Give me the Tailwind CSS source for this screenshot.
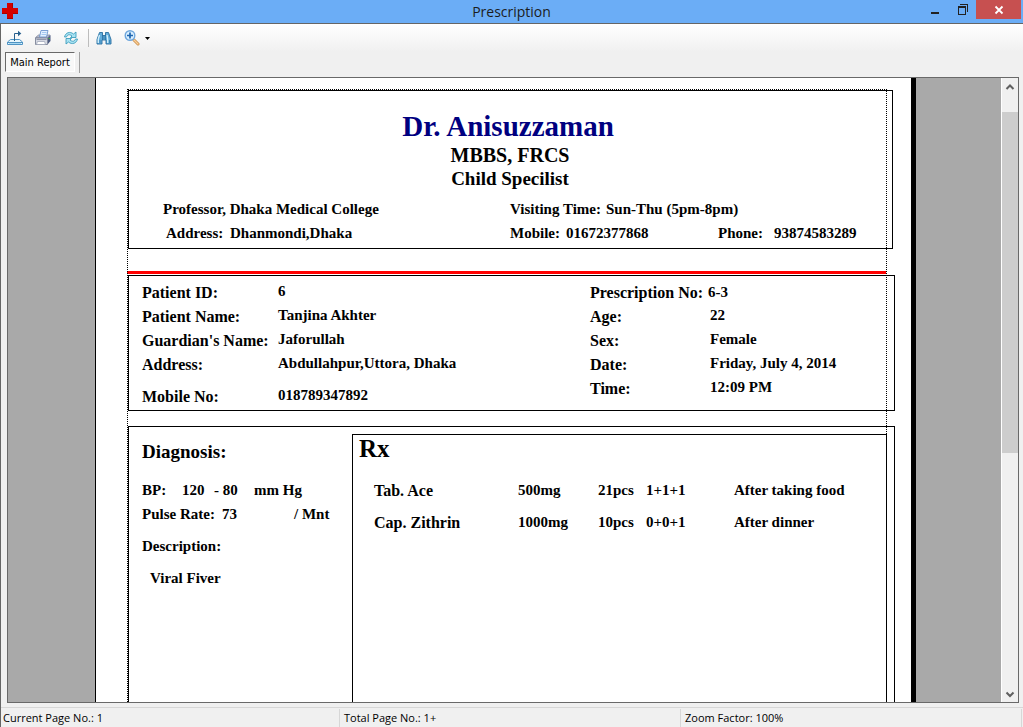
<!DOCTYPE html>
<html lang="en">
<head>
<meta charset="utf-8">
<meta name="viewport" content="width=device-width, initial-scale=1">
<title>Prescription</title>
<script src="https://cdn.jsdelivr.net/npm/@tailwindcss/browser@4"></script>
</head>
<body class="flex h-screen flex-col overflow-hidden bg-[#f0f0f0] font-['Open_Sans',sans-serif] text-[11px] text-black">

<header class="relative flex h-6 shrink-0 items-start border-b border-[#666] bg-[#6badf6]">
  <svg class="mt-[3px] ml-[2px] size-4" viewBox="0 0 16 16" shape-rendering="crispEdges" aria-hidden="true"><path fill="#d40000" d="M5 0h6v5h5v6h-5v5H5v-5H0V5h5z"/><path fill="#a80000" d="M10 0h1v5h-1zM5 15h6v1H5zM0 10h5v1H0zM11 10h5v1h-5z"/></svg>
  <h1 class="absolute inset-x-0 top-0 text-center text-[14px] leading-[23px] text-[#1c1c1c]">Prescription</h1>
  <div class="relative ml-auto flex pr-[2px]">
    <button class="flex h-[19px] w-[27px] items-center justify-center" aria-label="Minimize"><svg class="h-4 w-4" viewBox="0 0 16 16" shape-rendering="crispEdges"><path fill="#222" d="M3 10h8v2H3z"/></svg></button>
    <button class="flex h-[19px] w-[27px] items-center justify-center" aria-label="Restore"><svg class="h-4 w-4" viewBox="0 0 16 16" shape-rendering="crispEdges"><path fill="#222" d="M3 4h8v9H3zM4 6v6h6V6zM5 2h8v8h-1V3H5z" fill-rule="evenodd"/></svg></button>
    <button class="flex h-[19px] w-[45px] items-center justify-center bg-[#c75050]" aria-label="Close"><svg class="h-4 w-4" viewBox="0 0 16 16"><path stroke="#fff" stroke-width="1.8" d="M4.500 4.500l7 7M11.500 4.500l-7 7"/></svg></button>
  </div>
</header>

<div class="flex min-h-0 flex-1 flex-col border-l border-[#666]">
  <nav class="flex h-7 shrink-0 items-center bg-linear-to-b from-white to-[#f0f0f0] pl-[6px]" aria-label="Report tools">
    <button class="mr-3 size-4" aria-label="Export">
      <svg class="size-4" viewBox="0 0 16 16" fill="none"><path d="M3.500 9.500h9l3 2.500v2.500H.5V12z" fill="#e6f5fc" stroke="#4f94c4"/><path d="M1 12.500h14" stroke="#4f94c4"/><path d="M2 13.500h12" stroke="#a9d8f0"/><path d="M7.500 11V3.500h4" stroke="#275f8c"/><path d="M11 .8v5.400L14.300 3.500z" fill="#275f8c"/></svg>
    </button>
    <button class="mr-3 size-4" aria-label="Print">
      <svg class="size-4" viewBox="0 0 16 16"><path d="M.5 7.500L3.500 5h11.500l-2.500 3z" fill="#b9bdc9" stroke="#8389a0" stroke-width=".8"/><path d="M4.500 7L6 .5h7L11.500 7z" fill="#e4f1ff" stroke="#6c95cf" stroke-width=".9"/><path d="M7 2.500h4.500M6.500 4.500H11" stroke="#a5c8f0"/><path d="M12.500 8L15.500 5v6l-3 3.500z" fill="#4c5a80"/><path d="M.5 8h12v6.500H.5z" fill="#d5d8e2" stroke="#7d8499" stroke-width=".9"/><path d="M1.500 9.500h10" stroke="#8f96a8"/><path d="M2.500 11.500h7l1 3h-9z" fill="#fff" stroke="#9aa1b3" stroke-width=".7"/><path d="M13.500 8.500h1.500" stroke="#49ae38"/></svg>
    </button>
    <button class="mr-[10px] size-4" aria-label="Refresh">
      <svg class="size-4" viewBox="0 0 16 16"><path d="M1.500 7C2.500 2.500 7 1 10.500 4L13 2v5.500H7.500L9 6C6.500 4 4.500 4.500 3.500 7z" fill="#a8e2f2" stroke="#2f95b8" stroke-width=".8"/><path d="M14.500 9C13.500 13.500 9 15 5.500 12L3 14V8.500h5.500L7 10c2.500 2 4.500 1.500 5.500-1z" fill="#a8e2f2" stroke="#2f95b8" stroke-width=".8"/></svg>
    </button>
    <span class="mr-[7px] -ml-px h-[18px] w-px bg-[#bdbdbd]"></span>
    <button class="mr-3 size-4" aria-label="Find">
      <svg class="size-4" viewBox="0 0 16 16"><path d="M3.500 2.500h3v3h3v-3h3l2.500 7v4.500h-5V10H6v4H1V9.500z" fill="#63addb" stroke="#286e9f" stroke-width=".9"/><path d="M3.500 5L2.300 9v4M11 5l.7 4v4" fill="none" stroke="#d2effb" stroke-width="1.400"/><path d="M6.500 5v5M9.500 5v5M8 6v3" stroke="#286e9f" stroke-width=".8"/><path d="M4 10v3M13.500 10v3" stroke="#3c87b9"/></svg>
    </button>
    <button class="flex items-center gap-[5px]" aria-label="Zoom">
      <svg class="size-4" viewBox="0 0 16 16"><path d="M10 10l4 4" stroke="#c98a45" stroke-width="3" stroke-linecap="round"/><path d="M10 10l4 4" stroke="#fad09a" stroke-width="1.500" stroke-linecap="round"/><circle cx="6" cy="5.500" r="4.800" fill="#d9efff" stroke="#6ea6dc" stroke-width="1.400"/><path d="M6 2.500v6M3 5.500h6" stroke="#1f66b0" stroke-width="1.700"/></svg>
      <svg class="h-[3px] w-[5px]" viewBox="0 0 5 3"><path d="M0 0h5L2.500 3z"/></svg>
    </button>
  </nav>

  <div class="flex h-[25px] shrink-0 items-start pl-1">
    <button class="h-5 w-[70px] border border-r-white border-b-white border-t-[#696969] border-l-[#696969] bg-[#f8f8f8] pt-px text-center font-['DejaVu_Sans_Condensed','DejaVu_Sans',sans-serif] text-[11px] leading-[18px] whitespace-nowrap">Main Report</button>
    <span class="ml-1 h-[21px] w-px bg-[#a0a0a0]"></span>
  </div>

  <main class="mr-1 ml-[6px] flex min-h-0 flex-1 border border-[#696969] bg-[#a9a9a9]">
    <div class="flex min-w-0 flex-1 justify-center overflow-hidden pl-[2px]">
      <article class="w-[821px] shrink-0 border-r-[5px] border-l border-black bg-white pt-[11px] pl-[31px] font-['Liberation_Serif',serif] text-[15px] leading-6 font-bold">
        <div class="relative flex h-full w-[760px] flex-col pt-px pl-px">
          <div class="pointer-events-none absolute inset-0 border border-b-0 border-dotted border-black"></div>

          <section class="w-[765px] shrink-0 border border-black pt-[18px] pb-[3px]">
            <div class="w-[758px] text-center">
              <h2 class="text-[29px] leading-[34px] text-[#000080]">Dr. Anisuzzaman</h2>
              <div class="pl-1">
                <p class="text-[20px]">MBBS, FRCS</p>
                <p class="text-[19px]">Child Specilist</p>
              </div>
            </div>
            <div class="mt-[6px] flex pl-[34px]">
              <p class="w-[347px]">Professor, Dhaka Medical College</p>
              <p class="w-24">Visiting Time:</p><p>Sun-Thu (5pm-8pm)</p>
            </div>
            <div class="flex pl-[37px]">
              <p class="w-16">Address:</p><p class="w-[280px]">Dhanmondi,Dhaka</p>
              <p class="w-14">Mobile:</p><p class="w-[152px]">01672377868</p>
              <p class="w-14">Phone:</p><p>93874583289</p>
            </div>
          </section>

          <hr class="mt-[22px] -ml-px h-[3px] w-[759px] shrink-0 border-0 bg-[#ff0000]">

          <section class="mt-px flex w-[767px] shrink-0 border border-black pb-px pl-[13px]">
            <div class="w-[136px] pt-[5px] text-[16px] whitespace-nowrap">
              <p>Patient ID:</p><p>Patient Name:</p><p>Guardian's Name:</p><p>Address:</p><p class="mt-2">Mobile No:</p>
            </div>
            <div class="w-[312px] pt-[3px]">
              <p>6</p><p>Tanjina Akhter</p><p>Jaforullah</p><p>Abdullahpur,Uttora, Dhaka</p><p class="mt-2">018789347892</p>
            </div>
            <div class="w-[118px] pt-[5px] text-[16px] whitespace-nowrap">
              <p>Prescription No:</p><p>Age:</p><p>Sex:</p><p>Date:</p><p>Time:</p>
            </div>
            <div class="pt-[5px]">
              <p class="leading-[22px]">6-3</p>
              <div class="pl-[2px]"><p>22</p><p>Female</p><p>Friday, July 4, 2014</p><p>12:09 PM</p></div>
            </div>
          </section>

          <section class="mt-[15px] flex min-h-0 w-[767px] flex-1 border border-b-0 border-black pt-[7px]">
            <div class="w-[223px] shrink-0 pt-[6px] pl-[13px]">
              <h3 class="text-[19px]">Diagnosis:</h3>
              <div class="mt-[14px] flex">
                <p class="w-10">BP:</p><p class="w-8">120</p><p class="w-10">- 80</p><p>mm Hg</p>
              </div>
              <div class="flex">
                <p class="w-20">Pulse Rate:</p><p class="w-[72px]">73</p><p>/ Mnt</p>
              </div>
              <p class="mt-2">Description:</p>
              <p class="mt-2 pl-2">Viral Fiver</p>
            </div>
            <div class="w-[535px] border border-b-0 border-black pl-[6px]">
              <h3 class="text-[25px] leading-7">Rx</h3>
              <table class="mt-3 ml-[15px] w-[490px] table-fixed text-left leading-8">
                <colgroup><col class="w-36"><col class="w-20"><col class="w-12"><col class="w-[88px]"><col></colgroup>
                <tbody>
                  <tr><th scope="row" class="text-[16px]">Tab. Ace</th><td class="align-top leading-[30px]">500mg</td><td class="align-top leading-[30px]">21pcs</td><td class="align-top leading-[30px]">1+1+1</td><td class="align-top leading-[30px]">After taking food</td></tr>
                  <tr><th scope="row" class="text-[16px]">Cap. Zithrin</th><td class="align-top leading-[30px]">1000mg</td><td class="align-top leading-[30px]">10pcs</td><td class="align-top leading-[30px]">0+0+1</td><td class="align-top leading-[30px]">After dinner</td></tr>
                </tbody>
              </table>
            </div>
          </section>
        </div>
      </article>
    </div>

    <div class="flex w-[17px] shrink-0 flex-col border-l border-white bg-[#f0f0f0]">
      <button class="flex h-[18px] shrink-0 items-center justify-center" aria-label="Scroll up"><svg class="size-4" viewBox="0 0 16 16"><path fill="none" stroke="#606060" stroke-width="2" d="M4.500 10L8 6.500l3.500 3.500"/></svg></button>
      <div class="flex flex-1 flex-col pt-4 pb-[232px]"><div class="flex-1 bg-[#cdcdcd]"></div></div>
      <button class="flex h-[17px] shrink-0 items-center justify-center" aria-label="Scroll down"><svg class="size-4" viewBox="0 0 16 16"><path fill="none" stroke="#606060" stroke-width="2" d="M4.500 6.500L8 10l3.500-3.500"/></svg></button>
    </div>
  </main>

  <footer class="mt-1 flex h-5 shrink-0 items-center border-t border-[#d7d7d7] pr-px leading-[18px]">
    <p class="flex-1 border-r border-[#d7d7d7] pl-[2px]">Current Page No.: 1</p>
    <p class="flex-1 border-r border-[#d7d7d7] pl-1">Total Page No.: 1+</p>
    <p class="flex-1 border-r border-[#d7d7d7] pl-1">Zoom Factor: 100%</p>
  </footer>
</div>
</body>
</html>
